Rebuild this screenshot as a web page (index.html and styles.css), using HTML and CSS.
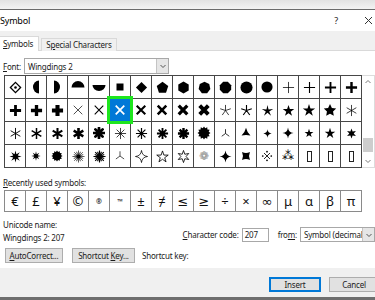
FILE: index.html
```html
<!DOCTYPE html>
<html lang="en">
<head>
    <meta charset="UTF-8">
    <meta name="viewport" content="width=device-width, initial-scale=1.0">
    <title>Symbol</title>
    <link rel="stylesheet" href="styles.css">
</head>
<body>
<svg class="defs" width="0" height="0">
    <symbol id="dotdia" viewBox="0 0 14 14"><path d="M7 1.5L12.5 7 7 12.5 1.5 7z" fill="none" stroke="currentColor" stroke-width="1.4"/><circle cx="7" cy="7" r="1.4" fill="currentColor"/></symbol>
    <symbol id="halfl" viewBox="0 0 14 14"><path d="M10 .5A6 6.5 0 0 0 10 13.5z" fill="currentColor"/></symbol>
    <symbol id="halfr" viewBox="0 0 14 14"><path d="M4 .5A6 6.5 0 0 1 4 13.5z" fill="currentColor"/></symbol>
    <symbol id="dome" viewBox="0 0 14 14"><path d="M.5 7.5A6.5 6.5 0 0 1 13.5 7.5z" fill="currentColor"/></symbol>
    <symbol id="bowl" viewBox="0 0 14 14"><path d="M.5 5A6.5 6 0 0 0 13.5 5z" fill="currentColor"/></symbol>
    <symbol id="sq" viewBox="0 0 14 14"><rect x="3.5" y="3.5" width="7" height="7" fill="currentColor"/></symbol>
    <symbol id="dia" viewBox="0 0 14 14"><path d="M7 1L13 7 7 13 1 7z" fill="currentColor"/></symbol>
    <symbol id="pent" viewBox="0 0 14 14"><path d="M7 .8L13.2 5.3 10.8 12.6 3.2 12.6.8 5.3z" fill="currentColor"/></symbol>
    <symbol id="hex" viewBox="0 0 14 14"><path d="M7 .5L12.6 3.75 12.6 10.25 7 13.5 1.4 10.25 1.4 3.75z" fill="currentColor"/></symbol>
    <symbol id="hept" viewBox="0 0 14 14"><path d="M7 .7L12.1 3.15 13.3 8.65 9.8 13.06 4.2 13.06.7 8.65 1.9 3.15z" fill="currentColor"/></symbol>
    <symbol id="oct" viewBox="0 0 14 14"><path d="M4.5.9H9.5L13.1 4.5V9.5L9.5 13.1H4.5L.9 9.5V4.5z" fill="currentColor"/></symbol>
    <symbol id="circ" viewBox="0 0 14 14"><circle cx="7" cy="7" r="6.5" fill="currentColor"/></symbol>
    <symbol id="plus" viewBox="0 0 14 14"><path d="M7 1V13M1 7H13" fill="none" stroke="currentColor"/></symbol>
    <symbol id="cross" viewBox="0 0 14 14"><path d="M2 2L12 12M12 2L2 12" fill="none" stroke="currentColor"/></symbol>
    <symbol id="sp3" viewBox="0 0 14 14"><path d="M7 7V1.5M7 7L2.2 10.5M7 7L11.8 10.5" fill="none" stroke="currentColor"/></symbol>
    <symbol id="sp5" viewBox="0 0 14 14"><path d="M7 7V1M7 7L12.7 5.1M7 7L10.5 11.9M7 7L3.5 11.9M7 7L1.3 5.1" fill="none" stroke="currentColor"/></symbol>
    <symbol id="sp6" viewBox="0 0 14 14"><path d="M7 1V13M1.8 4L12.2 10M1.8 10L12.2 4" fill="none" stroke="currentColor"/></symbol>
    <symbol id="sp8" viewBox="0 0 14 14"><path d="M7 1V13M1 7H13M2.8 2.8L11.2 11.2M11.2 2.8L2.8 11.2" fill="none" stroke="currentColor"/></symbol>
    <symbol id="sun" viewBox="0 0 14 14"><g fill="none" stroke="currentColor"><path d="M7 .5V13.5M.5 7H13.5M2.4 2.4L11.6 11.6M11.6 2.4L2.4 11.6"/><path d="M7 1.5V12.5M1.5 7H12.5M3.1 3.1L10.9 10.9M10.9 3.1L3.1 10.9" transform="rotate(22.5 7 7)"/></g><circle cx="7" cy="7" r="2.2" fill="currentColor"/></symbol>
    <symbol id="star3" viewBox="0 0 14 14"><path d="M7 1L8.9 5.9 12.2 10 7 9.2 1.8 10 5.1 5.9z" fill="currentColor"/></symbol>
    <symbol id="star4" viewBox="0 0 14 14"><path d="M7 .5Q7.6 6.4 13.5 7Q7.6 7.6 7 13.5Q6.4 7.6 .5 7Q6.4 6.4 7 .5z" fill="currentColor"/></symbol>
    <symbol id="star4o" viewBox="0 0 14 14"><path d="M7 .5Q7.6 6.4 13.5 7Q7.6 7.6 7 13.5Q6.4 7.6 .5 7Q6.4 6.4 7 .5z" fill="none" stroke="currentColor"/></symbol>
    <symbol id="star5" viewBox="0 0 14 14"><path d="M7 1L8.47 5.48 13.18 5.49 9.38 8.27 10.82 12.76 7 10 3.18 12.76 4.62 8.27.82 5.49 5.53 5.48z" fill="currentColor"/></symbol>
    <symbol id="star5t" viewBox="0 0 14 14"><path d="M7 1L8.12 5.96 13.18 5.49 8.81 8.09 10.82 12.76 7 9.4 3.18 12.76 5.19 8.09.82 5.49 5.88 5.96z" fill="currentColor"/></symbol>
    <symbol id="star5f" viewBox="0 0 14 14"><path d="M7 1L8.88 4.91 13.18 5.49 10.04 8.49 10.82 12.76 7 10.7 3.18 12.76 3.96 8.49.82 5.49 5.12 4.91z" fill="currentColor"/></symbol>
    <symbol id="star5o" viewBox="0 0 14 14"><path d="M7 1L8.47 5.48 13.18 5.49 9.38 8.27 10.82 12.76 7 10 3.18 12.76 4.62 8.27.82 5.49 5.53 5.48z" fill="none" stroke="currentColor"/></symbol>
    <symbol id="star6" viewBox="0 0 14 14"><path d="M7 .5L8.4 4.58 12.63 3.75 9.8 7 12.63 10.25 8.4 9.42 7 13.5 5.6 9.42 1.37 10.25 4.2 7 1.37 3.75 5.6 4.58z" fill="currentColor"/></symbol>
    <symbol id="star6o" viewBox="0 0 14 14"><path d="M7 .5L8.4 4.58 12.63 3.75 9.8 7 12.63 10.25 8.4 9.42 7 13.5 5.6 9.42 1.37 10.25 4.2 7 1.37 3.75 5.6 4.58z" fill="none" stroke="currentColor"/></symbol>
    <symbol id="star8" viewBox="0 0 14 14"><path d="M7 .5L8 4.6 11.6 2.4 9.4 6 13.5 7 9.4 8 11.6 11.6 8 9.4 7 13.5 6 9.4 2.4 11.6 4.6 8 .5 7 4.6 6 2.4 2.4 6 4.6z" fill="currentColor"/></symbol>
    <symbol id="blob" viewBox="0 0 14 14"><path d="M13.5 7L11.64 8.24 12.63 10.25 10.39 10.39 10.25 12.63 8.24 11.64 7 13.5 5.76 11.64 3.75 12.63 3.61 10.39 1.37 10.25 2.36 8.24.5 7 2.36 5.76 1.37 3.75 3.61 3.61 3.75 1.37 5.76 2.36 7 .5 8.24 2.36 10.25 1.37 10.39 3.61 12.63 3.75 11.64 5.76z" fill="currentColor"/></symbol>
    <symbol id="concsq" viewBox="0 0 14 14"><path d="M1.5 1.5Q7 4 12.5 1.5Q10 7 12.5 12.5Q7 10 1.5 12.5Q4 7 1.5 1.5z" fill="currentColor"/></symbol>
    <symbol id="refmark" viewBox="0 0 14 14"><path d="M3.5 3.5L10.5 10.5M10.5 3.5L3.5 10.5" fill="none" stroke="currentColor"/><g fill="currentColor"><circle cx="7" cy="2" r="1"/><circle cx="7" cy="12" r="1"/><circle cx="2" cy="7" r="1"/><circle cx="12" cy="7" r="1"/></g></symbol>
    <symbol id="chev" viewBox="0 0 8 8"><path d="M1.5 3L4 5.5 6.5 3" fill="none" stroke="currentColor"/></symbol>
</svg>

<div class="chrome"></div>
<div class="titlebar">
    <span class="title">Symbol</span>
    <span class="help">?</span>
    <svg class="close" width="9" height="9" viewBox="0 0 9 9"><path d="M1 1L8 8M8 1L1 8"/></svg>
</div>

<div class="tabs">
    <span class="tab active"><u>S</u>ymbols</span>
    <span class="tab">S<u>p</u>ecial Characters</span>
</div>

<div class="pane">
    <div class="fontrow">
        <label><u>F</u>ont:</label>
        <div class="select font-select">
            <span class="value">Wingdings 2</span>
            <span class="drop"><svg width="8" height="8"><use href="#chev"/></svg></span>
        </div>
    </div>

    <div class="gridbox">
        <div class="chars">
            <!-- row 1 -->
            <div class="c"><svg width="13" height="13"><use href="#dotdia"/></svg></div>
            <div class="c"><svg width="14" height="14"><use href="#halfl"/></svg></div>
            <div class="c"><svg width="14" height="14"><use href="#halfr"/></svg></div>
            <div class="c"><svg width="14" height="14"><use href="#dome"/></svg></div>
            <div class="c"><svg width="14" height="14"><use href="#bowl"/></svg></div>
            <div class="c"><svg width="14" height="14"><use href="#sq"/></svg></div>
            <div class="c"><svg width="13" height="13"><use href="#dia"/></svg></div>
            <div class="c"><svg width="13" height="13"><use href="#pent"/></svg></div>
            <div class="c"><svg width="13" height="13"><use href="#hex"/></svg></div>
            <div class="c"><svg width="13" height="13"><use href="#hept"/></svg></div>
            <div class="c"><svg width="13" height="13"><use href="#oct"/></svg></div>
            <div class="c"><svg width="13" height="13"><use href="#circ"/></svg></div>
            <div class="c"><svg width="12" height="12"><use href="#circ"/></svg></div>
            <div class="c"><svg width="13" height="13" stroke-width=".8"><use href="#plus"/></svg></div>
            <div class="c"><svg width="13" height="13" stroke-width="1.2"><use href="#plus"/></svg></div>
            <div class="c"><svg width="13" height="13" stroke-width="2"><use href="#plus"/></svg></div>
            <div class="c"><svg width="13" height="13" stroke-width="2.6"><use href="#plus"/></svg></div>
            <!-- row 2 -->
            <div class="c"><svg width="13" height="13" stroke-width="3"><use href="#plus"/></svg></div>
            <div class="c"><svg width="13" height="13" stroke-width="3.6"><use href="#plus"/></svg></div>
            <div class="c"><svg width="13" height="13" stroke-width="4.4"><use href="#plus"/></svg></div>
            <div class="c"><svg width="12" height="12" stroke-width=".8"><use href="#cross"/></svg></div>
            <div class="c"><svg width="12" height="12" stroke-width="1.3"><use href="#cross"/></svg></div>
            <div class="c sel"><svg width="12" height="12" stroke-width="2"><use href="#cross"/></svg></div>
            <div class="c"><svg width="12" height="12" stroke-width="2.4"><use href="#cross"/></svg></div>
            <div class="c"><svg width="12" height="12" stroke-width="3"><use href="#cross"/></svg></div>
            <div class="c"><svg width="12" height="12" stroke-width="3.8"><use href="#cross"/></svg></div>
            <div class="c"><svg width="12" height="12" stroke-width="4.6"><use href="#cross"/></svg></div>
            <div class="c"><svg width="13" height="13" stroke-width=".8"><use href="#sp5"/></svg></div>
            <div class="c"><svg width="13" height="13" stroke-width="1.2"><use href="#sp5"/></svg></div>
            <div class="c"><svg width="13" height="13"><use href="#star5t"/></svg></div>
            <div class="c"><svg width="13" height="13"><use href="#star5"/></svg></div>
            <div class="c"><svg width="14" height="14"><use href="#star5"/></svg></div>
            <div class="c"><svg width="14" height="14"><use href="#star5f"/></svg></div>
            <div class="c"><svg width="13" height="13" stroke-width=".8"><use href="#sp6"/></svg></div>
            <!-- row 3 -->
            <div class="c"><svg width="13" height="13" stroke-width="1"><use href="#sp6"/></svg></div>
            <div class="c"><svg width="13" height="13" stroke-width="1.6"><use href="#sp6"/></svg></div>
            <div class="c"><svg width="13" height="13" stroke-width="2.2"><use href="#sp6"/></svg></div>
            <div class="c"><svg width="13" height="13" stroke-width="2.8"><use href="#sp6"/></svg></div>
            <div class="c"><svg class="round" width="12" height="12" stroke-width="3.2"><use href="#sp8"/></svg></div>
            <div class="c"><svg width="13" height="13" stroke-width=".8"><use href="#sp8"/></svg></div>
            <div class="c"><svg width="13" height="13" stroke-width="1.3"><use href="#sp8"/></svg></div>
            <div class="c"><svg width="13" height="13" stroke-width="2"><use href="#sp8"/></svg></div>
            <div class="c"><svg width="13" height="13" stroke-width="2.6"><use href="#sp8"/></svg></div>
            <div class="c"><svg width="14" height="14"><use href="#blob"/></svg></div>
            <div class="c"><svg width="11" height="11" stroke-width="1"><use href="#sp3"/></svg></div>
            <div class="c"><svg width="12" height="12"><use href="#star3"/></svg></div>
            <div class="c"><svg width="9" height="9"><use href="#star4"/></svg></div>
            <div class="c"><svg width="12" height="12"><use href="#star4"/></svg></div>
            <div class="c"><svg width="10" height="10"><use href="#star5"/></svg></div>
            <div class="c"><svg width="12" height="12"><use href="#star5"/></svg></div>
            <div class="c"><svg width="11" height="11"><use href="#star6"/></svg></div>
            <!-- row 4 -->
            <div class="c"><svg width="13" height="13"><use href="#star8"/></svg></div>
            <div class="c"><svg width="10" height="10"><use href="#star8"/></svg></div>
            <div class="c"><svg width="12" height="12"><use href="#blob"/></svg></div>
            <div class="c"><svg width="13" height="13" stroke-width=".7"><use href="#sun"/></svg></div>
            <div class="c"><svg width="13" height="13" stroke-width="1.2"><use href="#sun"/></svg></div>
            <div class="c"><svg width="12" height="12" stroke-width=".8"><use href="#sp3"/></svg></div>
            <div class="c"><svg width="13" height="13" stroke-width=".8"><use href="#star4o"/></svg></div>
            <div class="c"><svg width="13" height="13" stroke-width=".9"><use href="#star5o"/></svg></div>
            <div class="c"><svg width="13" height="13" stroke-width=".9"><use href="#star6o"/></svg></div>
            <div class="c glyph gray">❁</div>
            <div class="c"><svg width="13" height="13"><use href="#star4"/></svg></div>
            <div class="c"><svg width="10" height="10"><use href="#concsq"/></svg></div>
            <div class="c"><svg width="12" height="12" stroke-width="1"><use href="#refmark"/></svg></div>
            <div class="c glyph">⁂</div>
            <div class="c"><span class="missing"></span></div>
            <div class="c"><span class="missing"></span></div>
            <div class="c"><span class="missing"></span></div>
        </div>
        <div class="scroll">
            <svg class="arrow up" width="8" height="8"><use href="#chev"/></svg>
            <div class="track"><div class="thumb"></div></div>
            <svg class="arrow" width="8" height="8"><use href="#chev"/></svg>
        </div>
    </div>

    <div class="recent-label"><u>R</u>ecently used symbols:</div>
    <div class="recent">
        <div class="rc">€</div>
        <div class="rc">£</div>
        <div class="rc">¥</div>
        <div class="rc">©</div>
        <div class="rc small">®</div>
        <div class="rc small">™</div>
        <div class="rc">±</div>
        <div class="rc">≠</div>
        <div class="rc">≤</div>
        <div class="rc">≥</div>
        <div class="rc">÷</div>
        <div class="rc">×</div>
        <div class="rc">∞</div>
        <div class="rc">μ</div>
        <div class="rc">α</div>
        <div class="rc">β</div>
        <div class="rc">π</div>
    </div>

    <div class="info">
        <div class="names">
            <div>Unicode name:</div>
            <div class="charname">Wingdings 2: 207</div>
        </div>
        <div class="codes">
            <label><u>C</u>haracter code:</label>
            <div class="input">207</div>
            <label class="from">fro<u>m</u>:</label>
            <div class="select from-select">
                <span class="value">Symbol (decimal)</span>
                <span class="drop"><svg width="8" height="8"><use href="#chev"/></svg></span>
            </div>
        </div>
    </div>

    <div class="actions">
        <button class="btn autocorrect"><u>A</u>utoCorrect...</button>
        <button class="btn shortcut">Shortcut <u>K</u>ey...</button>
        <span class="shortcut-label">Shortcut key:</span>
    </div>
</div>

<div class="footer">
    <button class="btn default">Insert</button>
    <button class="btn cancel">Cancel</button>
</div>
</body>
</html>
```

FILE: styles.css
```css
* {
    box-sizing: border-box;
}
body {
    margin: 0;
    width: 375px;
    height: 300px;
    overflow: hidden;
    font-family: "Noto Sans", "DejaVu Sans", sans-serif;
    font-size: 8px;
    letter-spacing: -0.2px;
    color: #1b1b1b;
    background: #fff;
}
u {
    text-decoration: underline;
    text-underline-offset: 1px;
}
.defs {
    position: absolute;
}

/* window chrome */
.chrome {
    height: 10px;
    background: linear-gradient(#e2e2e2, #f3f3f3);
    border-bottom: 1px solid #6b6b6b;
}
.titlebar {
    height: 21px;
    display: flex;
    align-items: center;
}
.title {
    flex: 1;
    margin-left: 0;
    font-size: 9px;
    color: #000;
}
.help {
    width: 10px;
    text-align: center;
    font-size: 9px;
    margin-right: 23px;
}
.close {
    stroke: #333;
    stroke-width: 1;
    margin-right: 2px;
}

/* tabs */
.tabs {
    height: 20px;
    background: #f0f0f0;
    border-bottom: 1px solid #d9d9d9;
    display: flex;
    align-items: flex-end;
    gap: 2px;
}
.tab {
    height: 13px;
    line-height: 11px;
    padding: 0 4px;
    border: 1px solid #d9d9d9;
    border-bottom: none;
    background: #f0f0f0;
    margin-bottom: -1px;
}
.tab.active {
    height: 15px;
    line-height: 13px;
    padding: 0 5px 0 3px;
    border-left: none;
    background: #fff;
}

/* font row */
.fontrow {
    display: flex;
    align-items: center;
    margin-top: 7px;
    padding-left: 3px;
}
.fontrow label {
    width: 21px;
}
.select {
    display: flex;
    align-items: center;
    border: 1px solid #a8a8a8;
    background: #fff;
}
.select .value {
    flex: 1;
    min-width: 0;
    padding-left: 3px;
    white-space: nowrap;
    overflow: hidden;
}
.select .drop {
    width: 12px;
    align-self: stretch;
    display: flex;
    align-items: center;
    justify-content: center;
    background: #e6e6e6;
    border-left: 1px solid #c4c4c4;
    color: #555;
}
.font-select {
    width: 145px;
    height: 16px;
}

/* character grid */
.gridbox {
    display: flex;
    margin: 1px 0 0 4px;
}
.chars {
    display: grid;
    grid-template-columns: repeat(17, 20px);
    grid-auto-rows: 22px;
    gap: 1px;
    background: #474747;
    border: 1px solid #474747;
}
.c {
    background: #fff;
    display: flex;
    align-items: center;
    justify-content: center;
    color: #000;
}
.c svg {
    display: block;
    overflow: visible;
}
.round {
    stroke-linecap: round;
}
.c.sel {
    position: relative;
    z-index: 1;
    background: #0078d7;
    color: #fff;
    outline: 3px solid #1ee61e;
}
.glyph {
    font-family: "DejaVu Sans", sans-serif;
    font-size: 12px;
    letter-spacing: 0;
}
.gray {
    color: #8a8a8a;
}
.missing {
    width: 5px;
    height: 11px;
    border: 1px solid #222;
}
.scroll {
    width: 13px;
    display: flex;
    flex-direction: column;
    align-items: center;
    border: 1px solid #dcdcdc;
    border-left: none;
    padding: 2px 0;
    color: #7a7a7a;
}
.arrow.up {
    transform: rotate(180deg);
}
.track {
    flex: 1;
    width: 100%;
    display: flex;
    justify-content: center;
}
.thumb {
    margin-top: 52px;
    width: 10px;
    height: 14px;
    background: #cdcdcd;
}

/* recently used */
.recent-label {
    margin-top: 10px;
    padding-left: 3px;
    line-height: 10px;
}
.recent {
    display: grid;
    grid-template-columns: repeat(17, 20px);
    grid-auto-rows: 20px;
    gap: 1px;
    width: max-content;
    margin: 2px 0 0 4px;
    background: #8a8a8a;
    border: 1px solid #8a8a8a;
}
.rc {
    background: #fff;
    display: flex;
    align-items: center;
    justify-content: center;
    font-size: 13px;
    letter-spacing: 0;
    color: #111;
}
.rc.small {
    font-size: 7px;
    font-weight: bold;
}

/* info */
.info {
    display: flex;
    margin-top: 8px;
}
.names {
    width: 185px;
    padding-left: 3px;
    line-height: 10px;
}
.charname {
    margin-top: 3px;
}
.codes {
    display: flex;
    align-items: center;
    align-self: flex-end;
    margin-bottom: 1px;
    white-space: nowrap;
}
.input {
    width: 27px;
    height: 14px;
    line-height: 12px;
    border: 1px solid #a8a8a8;
    padding-left: 2px;
    margin-left: 3px;
}
.from {
    margin-left: 9px;
}
.from-select {
    width: 75px;
    height: 15px;
    margin-left: 3px;
}

/* buttons */
.btn {
    font-family: inherit;
    font-size: 8px;
    letter-spacing: -0.2px;
    color: #1b1b1b;
    height: 15px;
    padding: 0;
    background: #e1e1e1;
    border: 1px solid #adadad;
}
.actions {
    display: flex;
    align-items: center;
    margin-top: 5px;
    padding-left: 5px;
}
.autocorrect {
    width: 58px;
}
.shortcut {
    width: 63px;
    margin-left: 9px;
}
.shortcut-label {
    margin-left: 7px;
}
.footer {
    margin-top: 5px;
    margin-right: -4px;
    height: 32px;
    padding-top: 9px;
    display: flex;
    justify-content: flex-end;
    align-items: flex-start;
    gap: 8px;
    background: #f0f0f0;
    border-bottom: 3px solid #6e6e6e;
}
.default {
    width: 52px;
    border-color: #0078d7;
    box-shadow: inset 0 0 0 1px #0078d7;
}
.cancel {
    width: 50px;
}
```
